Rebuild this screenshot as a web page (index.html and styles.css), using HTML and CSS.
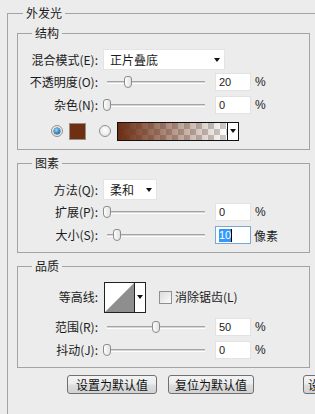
FILE: index.html
```html
<!DOCTYPE html>
<html lang="zh-CN">
<head>
    <meta charset="UTF-8">
    <meta name="viewport" content="width=device-width, initial-scale=1.0">
    <title>外发光</title>
    <link rel="stylesheet" href="styles.css">
</head>
<body>
<fieldset class="panel">
    <legend>外发光</legend>

    <fieldset class="group">
        <legend>结构</legend>
        <div class="row row-select">
            <span class="label">混合模式(E):</span>
            <div class="select select-wide"><span>正片叠底</span><i class="caret"></i></div>
        </div>
        <div class="row row-field gap-3">
            <span class="label">不透明度(O):</span>
            <div class="slider"><div class="track"></div><div class="thumb" style="left: 21px"></div></div>
            <div class="field">20</div>
            <span class="unit">%</span>
        </div>
        <div class="row row-field gap-5">
            <span class="label">杂色(N):</span>
            <div class="slider"><div class="track"></div><div class="thumb" style="left: 0px"></div></div>
            <div class="field">0</div>
            <span class="unit">%</span>
        </div>
        <div class="row row-color">
            <span class="radio on"></span>
            <span class="swatch"></span>
            <span class="radio"></span>
            <div class="gradient">
                <div class="gradient_fill"></div>
                <div class="gradient_drop"><i class="caret"></i></div>
            </div>
        </div>
    </fieldset>

    <fieldset class="group group-next">
        <legend>图素</legend>
        <div class="row row-select">
            <span class="label">方法(Q):</span>
            <div class="select select-small"><span>柔和</span><i class="caret"></i></div>
        </div>
        <div class="row row-field gap-3">
            <span class="label">扩展(P):</span>
            <div class="slider"><div class="track"></div><div class="thumb" style="left: 0px"></div></div>
            <div class="field">0</div>
            <span class="unit">%</span>
        </div>
        <div class="row row-field gap-5">
            <span class="label">大小(S):</span>
            <div class="slider"><div class="track"></div><div class="thumb" style="left: 10px"></div></div>
            <div class="field focused"><span class="sel">10</span><span class="cursor"></span></div>
            <span class="unit unit-cjk">像素</span>
        </div>
    </fieldset>

    <fieldset class="group group-next">
        <legend>品质</legend>
        <div class="row row-contour">
            <span class="label">等高线:</span>
            <div class="contour">
                <svg class="contour_curve" width="29" height="29" viewBox="0 0 29 29">
                    <rect width="29" height="29" fill="#fff"/>
                    <polygon points="0,29 29,0 29,29" fill="#8e8e8e"/>
                </svg>
                <div class="contour_drop"><i class="caret"></i></div>
            </div>
            <span class="checkbox"></span>
            <span class="check_label">消除锯齿(L)</span>
        </div>
        <div class="row row-field gap-6">
            <span class="label">范围(R):</span>
            <div class="slider"><div class="track"></div><div class="thumb" style="left: 49px"></div></div>
            <div class="field">50</div>
            <span class="unit">%</span>
        </div>
        <div class="row row-field gap-5">
            <span class="label">抖动(J):</span>
            <div class="slider"><div class="track"></div><div class="thumb" style="left: 0px"></div></div>
            <div class="field">0</div>
            <span class="unit">%</span>
        </div>
    </fieldset>

    <div class="buttons">
        <button class="btn btn-set">设置为默认值</button>
        <button class="btn btn-reset">复位为默认值</button>
        <button class="btn btn-more">设置</button>
    </div>
</fieldset>
</body>
</html>
```

FILE: styles.css
```css
html, body {
    margin: 0;
    width: 315px;
    height: 414px;
    overflow: hidden;
}

body {
    background-color: #ececec;
    color: #1b1b1b;
    font-family: "Noto Sans CJK SC", "Noto Sans", sans-serif;
    font-size: 12px;
}

fieldset {
    margin: 0;
    min-width: 0;
    border: 1px solid #a3a3a3;
}

legend {
    padding: 0 3px;
    line-height: 16px;
    font-size: 12px;
}

/* the outer frame runs on past the right and bottom edges */
.panel {
    margin: 5px 0 0 7px;
    width: 308px;
    height: 409px;
    padding: 4px 0 0 0;
    box-sizing: border-box;
    border-right: none;
    border-bottom: none;
}

.panel > legend {
    margin-left: 15px;
}

.group {
    margin-left: 9px;
    width: 293px;
    box-sizing: border-box;
    padding: 8px 0 8px 0;
}

.group > legend {
    margin-left: 14px;
}

.group-next {
    margin-top: 5px;
}

.group:first-of-type {
    padding-bottom: 9px;
}

/* rows */

.row {
    display: flex;
    align-items: center;
}

.row-select {
    height: 21px;
}

.row-field {
    height: 18px;
}

.gap-3 { margin-top: 3px; }
.gap-5 { margin-top: 5px; }
.gap-6 { margin-top: 6px; }

.label {
    width: 80px;
    margin-right: 5px;
    text-align: right;
    white-space: nowrap;
    line-height: 16px;
}

/* dropdowns */

.select {
    height: 21px;
    box-sizing: border-box;
    background-color: #fff;
    border: 1px solid #e4e4e4;
    display: flex;
    align-items: center;
    padding-left: 6px;
    padding-right: 4px;
}

.select span {
    flex: 1;
    line-height: 16px;
}

.select-wide {
    width: 122px;
}

.select-small {
    width: 54px;
}

.caret {
    display: block;
    width: 0;
    height: 0;
    border-left: 3.5px solid transparent;
    border-right: 3.5px solid transparent;
    border-top: 4px solid #111;
}

/* sliders */

.slider {
    position: relative;
    width: 102px;
    height: 18px;
}

.track {
    margin-left: 4px;
    margin-top: 8px;
    width: 98px;
    height: 1px;
    border-top: 1px solid #a4a4a4;
    border-bottom: 1px solid #fdfdfd;
    background-color: #d6d6d6;
}

.thumb {
    position: absolute;
    top: 3px;
    width: 8px;
    height: 12px;
    box-sizing: border-box;
    border: 1px solid #8c8c8c;
    border-radius: 3px 3px 4px 4px;
    background: linear-gradient(to right, #fdfdfd, #e2e2e2);
}

.field {
    margin-left: 10px;
    width: 36px;
    height: 18px;
    box-sizing: border-box;
    background-color: #fff;
    border: 1px solid #e2e2e2;
    padding-left: 3px;
    font-family: "Liberation Sans", Arial, sans-serif;
    font-size: 11px;
    line-height: 16px;
    display: flex;
    align-items: center;
}

.field.focused {
    border-color: #7ea6d4;
}

.sel {
    background-color: #3399ff;
    color: #fff;
    line-height: 13px;
}

.cursor {
    width: 1px;
    height: 13px;
    background-color: #000;
}

.unit {
    margin-left: 4px;
    font-family: "Liberation Sans", Arial, sans-serif;
    font-size: 12px;
}

.unit-cjk {
    margin-left: 3px;
    font-family: "Noto Sans CJK SC", sans-serif;
}

/* colour row */

.row-color {
    margin-top: 8px;
    height: 18px;
    padding-left: 33px;
}

.radio {
    width: 12px;
    height: 12px;
    box-sizing: border-box;
    border-radius: 50%;
    border: 1px solid #8f9090;
    background: radial-gradient(circle at 50% 40%, #ffffff, #dedede);
    display: flex;
    align-items: center;
    justify-content: center;
}

.radio.on::after {
    content: "";
    width: 6px;
    height: 6px;
    border-radius: 50%;
    background: radial-gradient(circle at 40% 35%, #9fdcff, #2a7fc0 60%, #0d4a7e);
    box-shadow: 0 0 0 0.5px #1d3f5e;
}

.swatch {
    margin-left: 6px;
    margin-right: 13px;
    width: 17px;
    height: 17px;
    box-sizing: border-box;
    border: 1px solid #9a8d86;
    background-color: #6e2f12;
}

.gradient {
    margin-left: 6px;
    width: 122px;
    height: 19px;
    box-sizing: border-box;
    border: 1px solid #111;
    display: flex;
}

.gradient_fill {
    flex: 1;
    background:
        linear-gradient(to right, #6b2d12, rgba(107, 45, 18, 0)),
        repeating-conic-gradient(#cbcbcb 0 25%, #ffffff 0 50%) 0 0 / 12px 12px;
}

.gradient_drop {
    width: 10px;
    border-left: 1px solid #111;
    background-color: #fff;
    display: flex;
    align-items: center;
    justify-content: center;
}

/* contour row */

.row-contour {
    height: 30px;
}

.contour {
    margin-left: 1px;
    width: 42px;
    height: 31px;
    box-sizing: border-box;
    border: 1px solid #222;
    display: flex;
}

.contour_curve {
    display: block;
}

.contour_drop {
    flex: 1;
    border-left: 1px solid #222;
    background-color: #fff;
    display: flex;
    align-items: center;
    justify-content: center;
}

.checkbox {
    margin-left: 13px;
    width: 13px;
    height: 13px;
    box-sizing: border-box;
    border: 1px solid #8f8f8f;
    background: linear-gradient(135deg, #dcdcdc, #fbfbfb);
}

.check_label {
    margin-left: 3px;
    line-height: 16px;
}

/* buttons */

.buttons {
    margin-top: 7px;
    display: flex;
    white-space: nowrap;
    overflow: hidden;
}

.btn {
    flex-shrink: 0;
    height: 19px;
    box-sizing: border-box;
    padding: 0;
    border: 1px solid #707070;
    border-radius: 3px;
    background: linear-gradient(#f3f3f3, #ececec 48%, #dedede 52%, #d2d2d2);
    font-family: "Noto Sans CJK SC", sans-serif;
    font-size: 12px;
    line-height: 16px;
    color: #111;
}

.btn-set {
    margin-left: 59px;
    width: 90px;
}

.btn-reset {
    margin-left: 11px;
    width: 86px;
}

.btn-more {
    margin-left: 49px;
    width: 80px;
    text-align: left;
    padding-left: 4px;
}
```
